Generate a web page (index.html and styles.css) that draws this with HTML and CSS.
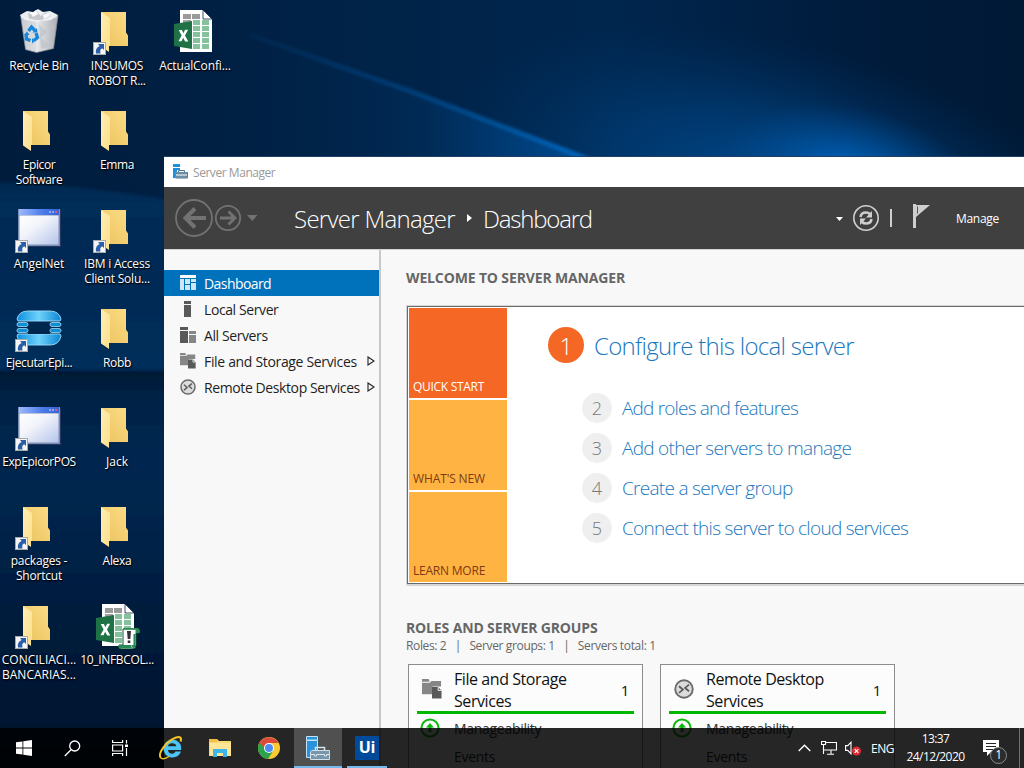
FILE: index.html
```
<!DOCTYPE html>
<html lang="en">
<head>
<meta charset="utf-8">
<title>Server Manager</title>
<link rel="stylesheet" href="styles.css">
</head>
<body>
<svg width="0" height="0" class="defs">
  <defs>
    <linearGradient id="fb" x1="0" y1="1" x2="1" y2="0"><stop offset="0" stop-color="#ecc35e"/><stop offset="1" stop-color="#fbdc86"/></linearGradient>
    <linearGradient id="ff" x1="0" y1="0" x2="1" y2="1"><stop offset="0" stop-color="#ffeeb4"/><stop offset="1" stop-color="#fddf8c"/></linearGradient>
    <linearGradient id="wt" x1="0" y1="0" x2="1" y2="0"><stop offset="0" stop-color="#9db9ff"/><stop offset=".6" stop-color="#4a7ae8"/><stop offset="1" stop-color="#3563d4"/></linearGradient>
    <linearGradient id="wb" x1="0" y1="0" x2="1" y2="1"><stop offset="0" stop-color="#fff"/><stop offset=".4" stop-color="#f2f4fb"/><stop offset="1" stop-color="#b4c4ea"/></linearGradient>
    <linearGradient id="ep" x1="0" y1="0" x2="1" y2="0"><stop offset="0" stop-color="#0a8fdc"/><stop offset=".5" stop-color="#6fd2fb"/><stop offset="1" stop-color="#0a86d2"/></linearGradient>
    <linearGradient id="bin" x1="0" y1="0" x2="1" y2="0"><stop offset="0" stop-color="#c9ccd0"/><stop offset=".5" stop-color="#dfe1e4"/><stop offset="1" stop-color="#a9adb3"/></linearGradient>
    <symbol id="folder" viewBox="0 0 48 48">
      <path d="M8 5h25v20.500l2 3V39H16z" fill="url(#fb)"/>
      <path d="M8 5l9 6v28h-1v6L8 39.500z" fill="url(#ff)"/>
    </symbol>
    <symbol id="link" viewBox="0 0 13 13">
      <path d="M0 0h13v13H0z" fill="#a9a9a9"/><path d="M1 1h11v11H1z" fill="#f5f5f5"/>
      <path d="M5 2h6v6L9.200 6.300C7 7.500 7 9 7.500 11.500H3C2.200 8 3.500 5.500 6.600 3.900z" fill="#2b5ea8"/>
    </symbol>
    <symbol id="appwin" viewBox="0 0 48 48">
      <path d="M4 5h42v37H4z" fill="#26375f"/><path d="M3 4h42v37H3z" fill="#7b8fb5"/>
      <path d="M4 4h40v6H4z" fill="url(#wt)"/><path d="M4.500 10.500h39v29h-39z" fill="url(#wb)"/>
      <path d="M34 6h2v2h-2zM37 6h2v2h-2z" fill="#8fa9ee"/><path d="M40 6h2.500v2H40z" fill="#d8567a"/>
    </symbol>
    <symbol id="sheet" viewBox="0 0 48 48">
      <path d="M9 3h23l9 9v33H9z" fill="#fff"/><path d="M32 3l9 9h-9z" fill="#fff" stroke="#0a2140" stroke-width=".8"/>
      <path d="M12 7h8v5h-8zM21 7h8v5h-8z" fill="#9a9a9a"/><path d="M12 13h8v5h-8z" fill="#a2a2a2"/>
      <path d="M22 13h7v5h-7zM31 13h7v5h-7zM22 19h7v5h-7zM31 19h7v5h-7zM22 25h7v5h-7zM31 25h7v5h-7zM22 31h7v5h-7zM31 31h7v5h-7zM22 37h7v5h-7zM31 37h7v5h-7z" fill="#85c19d"/>
      <path d="M3 17l18-3v28L3 39z" fill="#1e7245"/>
      <path d="M7.700 23h3.200l1.500 3.200 1.700-3.500h3L14 28.500l3.300 6h-3.200l-1.900-3.700-1.700 3.500H7.400l3.200-5.800z" fill="#fff"/>
    </symbol>
    <symbol id="toolbox" viewBox="0 0 24 24">
      <path d="M.5.500h11v3.500H.5zM.5 4.500h11v17H.5z" fill="#2a92da" stroke="#bfe2f7"/>
      <path d="M9.500 15v-3.500h9V15" fill="none" stroke="#d7e3ea" stroke-width="1.500"/>
      <path d="M5.500 14.500h18v9h-19v-8z" fill="#7796ab" stroke="#d0dde5"/><path d="M5 18.500h3.500v1.500h2v-1.500h8v1.500h2v-1.500H23" stroke="#dbe6ec" fill="none"/>
    </symbol>
    <symbol id="storage" viewBox="0 0 21 21">
      <path d="M0 0h7l1 3H0zM0 4h8l2-2h10v6h-9v8H0z" fill="#868686"/><path d="M10.500 8.500h6.500l3.500 3.500v8.500h-10z" fill="#595959"/><path d="M17 8.500v3.500h3.500" fill="none" stroke="#fafafa"/>
    </symbol>
    <symbol id="remote" viewBox="0 0 18 18">
      <circle cx="9" cy="9" r="7.900" fill="#dcdcdc" stroke="#6b6b6b" stroke-width="1.700"/>
      <path d="M4.500 6.500L8 9.500l-3.500 3M13.500 5L10 8l3.500 3" fill="none" stroke="#5a5a5a" stroke-width="1.600"/>
    </symbol>
    <symbol id="up" viewBox="0 0 20 20">
      <circle cx="10" cy="10" r="8.600" fill="none" stroke="#0cb80c" stroke-width="2"/><path d="M10 5l4 4.500h-2.500V14h-3V9.500H6z" fill="#0cb80c"/>
    </symbol>
  </defs>
</svg>

<main class="desktop">
  <svg class="wallpaper" viewBox="0 0 1024 768" preserveAspectRatio="none">
    <defs>
      <linearGradient id="sky" x1="0" y1="0" x2="1" y2="0"><stop offset="0" stop-color="#001c3d"/><stop offset=".3" stop-color="#002246"/><stop offset=".6" stop-color="#00264e"/><stop offset=".85" stop-color="#001b3b"/><stop offset="1" stop-color="#001935"/></linearGradient>
      <radialGradient id="haze" gradientUnits="userSpaceOnUse" cx="0" cy="0" r="1" gradientTransform="translate(780 190) rotate(14) scale(340 150)"><stop offset="0" stop-color="#004c92"/><stop offset=".5" stop-color="#003f7a" stop-opacity=".65"/><stop offset="1" stop-color="#003060" stop-opacity="0"/></radialGradient>
      <radialGradient id="glow" gradientUnits="userSpaceOnUse" cx="0" cy="0" r="1" gradientTransform="translate(850 172) rotate(12) scale(130 66)"><stop offset="0" stop-color="#006ac8"/><stop offset=".4" stop-color="#005cb0" stop-opacity=".6"/><stop offset="1" stop-color="#004c94" stop-opacity="0"/></radialGradient>
      <linearGradient id="under" gradientUnits="userSpaceOnUse" x1="250" y1="0" x2="740" y2="0"><stop offset="0" stop-color="#00234a" stop-opacity="0"/><stop offset=".35" stop-color="#002c58"/><stop offset=".68" stop-color="#0054a2"/><stop offset="1" stop-color="#0060b4"/></linearGradient>
      <linearGradient id="beam" gradientUnits="userSpaceOnUse" x1="250" y1="0" x2="580" y2="0"><stop offset="0" stop-color="#0a4282" stop-opacity=".15"/><stop offset=".5" stop-color="#084a8c" stop-opacity=".7"/><stop offset="1" stop-color="#0564ba"/></linearGradient>
      <linearGradient id="left" x1="0" y1="0" x2="0" y2="1"><stop offset="0" stop-color="#00305e" stop-opacity=".5"/><stop offset=".1" stop-color="#002d58"/><stop offset=".35" stop-color="#002a54"/><stop offset="1" stop-color="#002f5c"/></linearGradient>
      <linearGradient id="low" x1="0" y1="0" x2="0" y2="1"><stop offset="0" stop-color="#001832"/><stop offset=".05" stop-color="#002043"/><stop offset=".2" stop-color="#002850"/><stop offset=".4" stop-color="#00234a"/><stop offset=".55" stop-color="#001d3f"/><stop offset="1" stop-color="#001128"/></linearGradient>
      <filter id="soft" x="-10%" y="-50%" width="120%" height="200%"><feGaussianBlur stdDeviation="1.800"/></filter>
    </defs>
    <path d="M0 0h1024v768H0z" fill="url(#sky)"/>
    <path d="M400 0h624v160H400z" fill="url(#haze)"/>
    <path d="M240 32L410 92 590 160H240z" fill="url(#under)" opacity=".75"/>
    <path d="M600 60h424v100H600z" fill="url(#glow)"/>
    <path d="M250 35L410 91 590 160" fill="none" stroke="url(#beam)" stroke-width="5" filter="url(#soft)"/>
    <path d="M-10 182Q80 184 180 202V400H-10z" fill="url(#left)" filter="url(#soft)"/>
    <path d="M-10 371h190v410H-10z" fill="url(#low)" filter="url(#soft)"/>
  </svg>

  <section class="icons">
    <div class="icon"><div class="pic"><svg viewBox="0 0 48 48">
      <path d="M5.500 8l5 34.500 11 3 17-4 4.500-33z" fill="url(#bin)" stroke="#8c9299" stroke-width=".7"/>
      <path d="M5 8l7-4 6 1 5-3 5 3 7-1 8 4-7 5-14 2-12-2z" fill="#eceef0"/><path d="M13 6l5 2 3-4 5 5 5-4 5 4-9 5-13-2z" fill="#c5c9cd"/><path d="M15 5l3 1 3-3 2 4-5 3zM28 8l5-2 2 3-6 3z" fill="#fafafa"/>
      <path d="M6 10l16 4 20-4M22 14v31" fill="none" stroke="#f5f6f7" stroke-width=".8"/><path d="M24 18l8 7-6 6 9 8-9 3zM34 14l6 4-4 8z" fill="#bfc3c8" opacity=".7"/>
      <g fill="none" stroke="#1787dc" stroke-width="3.400"><path d="M13.500 24l3-4 3.500 3.500M21 26l1.500 4.500-3.500 3M15.500 33.500l-4-1.500-.5-5"/></g>
      <path d="M17.500 25.500l5 0-.5-4.500zM17 31l0 5.500 3-2.500zM9 28l3-3.500 2.500 3.500z" fill="#1787dc"/>
    </svg></div><p>Recycle Bin</p></div>
    <div class="icon"><div class="pic"><svg viewBox="0 0 48 48"><use href="#folder"/></svg></div><p class="t4">Epicor<br>Software</p></div>
    <div class="icon"><div class="pic"><svg viewBox="0 0 48 48"><use href="#appwin"/></svg><svg class="arrow"><use href="#link"/></svg></div><p class="t1">AngelNet</p></div>
    <div class="icon"><div class="pic"><svg viewBox="0 0 48 48">
      <g stroke="#9cdcff" stroke-width=".9"><path d="M2 15Q4 7 13 7h22q9 0 11 8l-1 2H3z" fill="url(#ep)"/><path d="M3 30h42l1 2q-2 9-11 9H13Q4 41 2 32z" fill="url(#ep)"/></g>
      <path d="M13 18h22v12H13z" fill="#00284f"/>
      <g fill="#0d8fd8" stroke="#a9d9f3" stroke-width=".8"><rect x="2" y="18.500" width="11" height="4" rx="1.900"/><rect x="2" y="24.500" width="11" height="4" rx="1.900"/><rect x="35" y="18.500" width="11" height="4" rx="1.900"/><rect x="35" y="24.500" width="11" height="4" rx="1.900"/></g>
    </svg><svg class="arrow"><use href="#link"/></svg></div><p class="t4">EjecutarEpi...</p></div>
    <div class="icon"><div class="pic"><svg viewBox="0 0 48 48"><use href="#appwin"/></svg><svg class="arrow"><use href="#link"/></svg></div><p class="t4">ExpEpicorPOS</p></div>
    <div class="icon"><div class="pic"><svg viewBox="0 0 48 48"><use href="#folder"/></svg><svg class="arrow"><use href="#link"/></svg></div><p class="t2">packages -<br>Shortcut</p></div>
    <div class="icon"><div class="pic"><svg viewBox="0 0 48 48"><use href="#folder"/></svg><svg class="arrow"><use href="#link"/></svg></div><p class="t0">CONCILIACI...<br>BANCARIAS...</p></div>

    <div class="icon"><div class="pic"><svg viewBox="0 0 48 48"><use href="#folder"/></svg><svg class="arrow"><use href="#link"/></svg></div><p>INSUMOS<br>ROBOT R...</p></div>
    <div class="icon"><div class="pic"><svg viewBox="0 0 48 48"><use href="#folder"/></svg></div><p class="t4">Emma</p></div>
    <div class="icon"><div class="pic"><svg viewBox="0 0 48 48"><use href="#folder"/></svg><svg class="arrow"><use href="#link"/></svg></div><p class="t2">IBM i Access<br>Client Solu...</p></div>
    <div class="icon"><div class="pic"><svg viewBox="0 0 48 48"><use href="#folder"/></svg></div><p>Robb</p></div>
    <div class="icon"><div class="pic"><svg viewBox="0 0 48 48"><use href="#folder"/></svg></div><p class="t0">Jack</p></div>
    <div class="icon"><div class="pic"><svg viewBox="0 0 48 48"><use href="#folder"/></svg></div><p>Alexa</p></div>
    <div class="icon"><div class="pic"><svg viewBox="0 0 48 48"><use href="#sheet"/>
      <path d="M30 28h15q2 1 1 4h-3v12q0 4-4 4H28q-3-1-2-4h4z" fill="#fff" stroke="#0f5a34" stroke-width="1"/><path d="M30 27h15q2.500 1.500 1.500 5h-4v-3.500H31zM26 44h12q0 3 3 3.500H27.500Q25 47 26 44zM42.500 33v11q-.5 3-2 3.500-2-1-2-3.500h2V33z" fill="#2a8a57"/>
      <path d="M34 30h4l-.7 8h-2.600zM34.700 39.500h2.600V42h-2.600z" fill="#333"/></svg></div><p class="t3">10_INFBCOL...</p></div>

    <div class="icon"><div class="pic"><svg viewBox="0 0 48 48"><use href="#sheet"/></svg></div><p class="t1">ActualConfi...</p></div>
  </section>

  <section class="window">
    <header class="titlebar">
      <svg width="15" height="15" viewBox="0 0 15 15"><path d="M0 0h7v3H0zM0 4h7v2H4v3H2v5H0z" fill="#1e8fe0"/><path d="M5.500 8V6.500h6V8M2.500 8.500h12V14h-12z" fill="none" stroke="#54778e"/><path d="M2 8h12.500v2.500H2zM2 11.500h12.500V14H2z" fill="#6b8da5"/></svg>
      <span>Server Manager</span>
    </header>
    <nav class="banner">
      <svg class="navbtns" width="84" height="40" viewBox="0 0 84 40" fill="none" stroke="#727272">
        <circle cx="19" cy="20" r="18" stroke-width="1.800"/><path d="M31 20H10M20 10.500L10.500 20 20 29.500" stroke-width="4"/>
        <circle cx="53" cy="20" r="12.200" stroke-width="1.800"/><path d="M45 20h14M53.500 13.500L60 20l-6.500 6.500" stroke-width="2.800"/>
        <path d="M72 17h10.500l-5.200 6z" fill="#727272" stroke="none"/>
      </svg>
      <h1 class="crumb"><span class="c1">Server Manager</span><svg width="5" height="8" viewBox="0 0 5 8"><path d="M0 0l5 4-5 4z" fill="#fff"/></svg><span class="c2">Dashboard</span></h1>
      <div class="tools">
        <svg width="96" height="36" viewBox="0 0 96 36">
          <path d="M0 17h7l-3.500 4z" fill="#fff"/>
          <circle cx="30" cy="18" r="12.200" fill="none" stroke="#cfcfcf" stroke-width="1.600"/>
          <path d="M24.500 17q.5-4.500 5.500-4.500 2.500 0 4 1.500M35.500 19q-.5 4.500-5.500 4.500-2.500 0-4-1.500" fill="none" stroke="#cfcfcf" stroke-width="2.500"/><path d="M36 11v6.500h-6zM24 25v-6.500h6z" fill="#cfcfcf"/>
          <path d="M54 9h2v18h-2z" fill="#cfcfcf"/>
          <path d="M77 4h3v24h-3zM80 5h14L80 17z" fill="#cfcfcf"/><path d="M81.500 6.500v7" stroke="#555"/>
        </svg>
        <span class="manage">Manage</span>
      </div>
    </nav>
    <div class="body">
      <aside class="sidebar">
        <div class="item active"><svg viewBox="0 0 16 16"><path d="M0 0h16v3H0z" fill="#fff"/><path d="M0 4h4v11H0zM5 4h5v5H5zM11 4h5v3h-5zM5 10h5v5H5zM11 8h5v7h-5z" fill="#cfe6f6"/></svg><span class="t6">Dashboard</span></div>
        <div class="item"><svg viewBox="0 0 16 16"><path d="M4 0h7v3H4zM4 4h7v12H4z" fill="#595959"/></svg><span class="t4">Local Server</span></div>
        <div class="item"><svg viewBox="0 0 16 16"><path d="M0 0h8v3H0zM0 4h8v12H0z" fill="#595959"/><path d="M9 4h7v3H9zM9 8h7v8H9z" fill="#868686"/></svg><span class="t4">All Servers</span></div>
        <div class="item"><svg viewBox="0 0 21 21"><use href="#storage"/></svg><span>File and Storage Services</span><svg class="exp" viewBox="0 0 8 10"><path d="M1 1l6 4-6 4z" fill="none" stroke="#222" stroke-width="1.100"/></svg></div>
        <div class="item"><svg viewBox="0 0 18 18"><use href="#remote"/></svg><span class="t4">Remote Desktop Services</span><svg class="exp" viewBox="0 0 8 10"><path d="M1 1l6 4-6 4z" fill="none" stroke="#222" stroke-width="1.100"/></svg></div>
      </aside>
      <div class="content">
        <h2>WELCOME TO SERVER MANAGER</h2>
        <div class="welcome">
          <div class="tiles"><div class="tile hot">QUICK START</div><div class="tile t1">WHAT'S NEW</div><div class="tile t2">LEARN MORE</div></div>
          <div class="steps">
            <div class="first"><b>1</b><span>Configure this local server</span></div>
            <div class="step"><b>2</b><span class="s8">Add roles and features</span></div>
            <div class="step"><b>3</b><span>Add other servers to manage</span></div>
            <div class="step"><b>4</b><span>Create a server group</span></div>
            <div class="step"><b>5</b><span>Connect this server to cloud services</span></div>
          </div>
        </div>
        <h2 class="roles">ROLES AND SERVER GROUPS</h2>
        <div class="counts"><span>Roles: 2</span><i>|</i><span>Server groups: 1</span><i>|</i><span class="t3">Servers total: 1</span></div>
        <div class="cards">
          <article class="card"><div class="head"><svg viewBox="0 0 21 21"><use href="#storage"/></svg><h3>File and Storage<br>Services</h3><em>1</em></div>
            <div class="row"><svg viewBox="0 0 20 20"><use href="#up"/></svg><span>Manageability</span></div><div class="row"><span class="solo">Events</span></div></article>
          <article class="card"><div class="head"><svg viewBox="0 0 18 18"><use href="#remote"/></svg><h3>Remote Desktop<br>Services</h3><em>1</em></div>
            <div class="row"><svg viewBox="0 0 20 20"><use href="#up"/></svg><span>Manageability</span></div><div class="row"><span class="solo">Events</span></div></article>
        </div>
      </div>
    </div>
  </section>

  <footer class="taskbar">
    <div class="btn"><svg width="16" height="16" viewBox="0 0 16 16"><path d="M0 2.300L6.500 1.400v6.100H0zM7.300 1.300L16 0v7.500H7.300zM0 8.400h6.500v6.200L0 13.700zM7.300 8.400H16V16l-8.700-1.300z" fill="#fff"/></svg></div>
    <div class="btn"><svg width="17" height="17" viewBox="0 0 17 17" fill="none" stroke="#fff" stroke-width="1.300"><circle cx="10.700" cy="6" r="5"/><path d="M7 9.700L.8 16"/></svg></div>
    <div class="btn"><svg width="16" height="16" viewBox="0 0 16 16" fill="none" stroke="#fff" stroke-width="1.200"><path d="M.6 0v2.500h10V0M.6 16v-2.500h10V16M.6 5h10v6H.6zM14.500 0v3.500M14.500 8v8"/><path d="M13 4.500h3v2.500h-3z" fill="#fff" stroke="none"/></svg></div>
    <div class="btn ie"><svg width="24" height="24" viewBox="0 0 24 24"><path d="M22 15.500A9 9 0 1 1 21.500 8.500q.9 2.200.7 5.500H9q.4 3.800 4.200 3.800 2.300 0 3.300-2.300zM9 10.300h8.300q-.4-3-4.100-3-3.700 0-4.200 3z" fill="#4cc4f6" fill-rule="evenodd"/><path d="M2 22C-2 18 7 5 17 1.500c4-1.300 6 .3 4.500 4" fill="none" stroke="#f4c320" stroke-width="2"/><path d="M2 22c2 1.500 5 .5 8-1.500" fill="none" stroke="#f4c320" stroke-width="1.500"/></svg></div>
    <div class="btn"><svg width="22" height="19" viewBox="0 0 22 19"><path d="M0 0h8l2 2h12v15H0z" fill="#f8d775"/><path d="M1 4h21v13H1z" fill="#ffe697"/><path d="M0 0h8v3H0z" fill="#f1bd43"/><path d="M4 18v-8h14v8h-4v-4H8v4z" fill="#3db5e8"/></svg></div>
    <div class="btn"><svg width="22" height="22" viewBox="0 0 22 22"><circle cx="11" cy="11" r="11" fill="#f8cb35"/><path d="M1.500 5.500A11 11 0 0 0 10 22l5.300-8.500L11 11z" fill="#2ba24c"/><path d="M1.500 5.500A11 11 0 0 1 20.500 6H11q-4.300.3-5 5z" fill="#dc4a3d"/><circle cx="11" cy="11" r="5" fill="#fff"/><circle cx="11" cy="11" r="4" fill="#4c8bf5"/></svg></div>
    <div class="btn on"><svg width="24" height="24"><use href="#toolbox"/></svg></div>
    <div class="btn run"><div class="ui">Ui</div></div>
    <div class="tray">
      <svg class="chev" width="13" height="8" viewBox="0 0 13 8"><path d="M.7 7L6.500 1.200 12.300 7" fill="none" stroke="#fff" stroke-width="1.400"/></svg>
      <svg class="net" width="16" height="14" viewBox="0 0 16 14" fill="none" stroke="#fff" stroke-width="1.100"><path d="M4.500 1.500h11v7.500h-11M.5.500h4v3h-4zM2.500 3.500V13M2 9h2.500M10 9v4M6 13.300h7"/></svg>
      <svg class="vol" width="16" height="15" viewBox="0 0 16 15"><path d="M.6 4.600h2.200L6 1.200v11.600L2.800 9.400H.6z" fill="none" stroke="#fff" stroke-width="1.100"/><circle cx="11.500" cy="10" r="4.500" fill="#dc2b32"/><path d="M9.700 8.200l3.600 3.600M13.300 8.200l-3.600 3.600" stroke="#fff" stroke-width="1.200"/></svg>
      <span class="lang">ENG</span>
      <div class="clock"><span class="time">13:37</span><span>24/12/2020</span></div>
      <div class="note"><svg width="16" height="16" viewBox="0 0 16 16"><path d="M0 0h16v12H8l-4 4v-4H0z" fill="#fff"/><path d="M3 3.500h10M3 6.500h10M3 9.500h7" stroke="#252525"/></svg><span class="badge">1</span></div>
      <div class="peek"></div>
    </div>
  </footer>
</main>
</body>
</html>
```
FILE: styles.css
```
* { box-sizing: border-box; margin: 0; padding: 0; }
body { font-family: "Open Sans", "Noto Sans", sans-serif; font-size: 12px; letter-spacing: -0.3px; overflow: hidden; }
svg { display: block; flex: none; }
.defs { position: absolute; }
.t0 { letter-spacing: 0 !important; }
.t1 { letter-spacing: -0.12px !important; }
.t2 { letter-spacing: -0.22px !important; }
.t3 { letter-spacing: -0.33px !important; }
.t4 { letter-spacing: -0.4px !important; }
.t6 { letter-spacing: -0.57px !important; }

.desktop { position: relative; width: 1024px; height: 768px; overflow: hidden; background: #001c3d; }
.wallpaper { position: absolute; inset: 0; width: 100%; height: 100%; }

.icons { position: relative; display: grid; grid-auto-flow: column; grid-template-rows: repeat(7, 99px); grid-auto-columns: 78px; width: max-content; }
.icon { padding-top: 7px; display: flex; flex-direction: column; align-items: center; }
.pic { position: relative; width: 48px; height: 48px; }
.pic svg { width: 48px; height: 48px; }
.pic .arrow { position: absolute; left: 0; top: 35px; width: 13px; height: 13px; }
.icon p { margin-top: 3px; line-height: 15px; color: #fff; text-align: center; white-space: nowrap; text-shadow: 0 1px 2px #000, 1px 1px 1px rgba(0,0,0,.7); }

.window { position: absolute; left: 164px; top: 157px; width: 862px; height: 620px; background: #f8f8f8; box-shadow: 0 -1px 0 #1d4064; }
.titlebar { height: 30px; background: #fff; display: flex; align-items: center; gap: 5px; padding-left: 9px; color: #999; letter-spacing: -0.45px; }
.titlebar svg { margin-bottom: 2px; }
.banner { height: 62px; background: #404040; display: flex; align-items: center; padding-left: 11px; color: #fff; }
.crumb { display: flex; align-items: center; font-size: 24px; font-weight: 300; line-height: 32px; margin-left: 35px; padding-top: 2px; }
.crumb svg { margin: 0 11px 3px 12px; }
.c1 { width: 161px; letter-spacing: -0.7px; white-space: nowrap; }
.c2 { width: 110px; letter-spacing: -1.2px; }
.tools { display: flex; align-items: center; margin-left: 243px; }
.manage { margin-left: 24px; }

.body { display: flex; height: 528px; border-top: 1px solid #d4d4d4; }
.sidebar { flex: none; width: 217px; border-right: 2px solid #c9c9c9; padding-top: 20px; font-size: 14px; letter-spacing: -0.33px; color: #1e1e1e; }
.item { height: 26px; display: flex; align-items: center; padding-left: 16px; padding-right: 4px; white-space: nowrap; }
.item svg { width: 16px; height: 16px; margin-right: 8px; }
.item span { padding-top: 1px; }
.item .exp { width: 8px; height: 10px; margin: 0 0 0 auto; }
.active { background: #0072bc; color: #fff; }

.content { padding: 18px 0 0 25px; flex: 1; min-width: 0; }
h2 { font-size: 14px; line-height: 20px; font-weight: 700; letter-spacing: -0.14px; color: #666; }
.welcome { margin-top: 18px; width: 700px; height: 278px; border: 1px solid #6a6a6a; background: #fff; box-shadow: 0 0 0 1px #d6d6d6, 0 2px 0 #d6d6d6; display: flex; padding: 1px; margin-left: 1px; }
.tiles { display: flex; flex-direction: column; gap: 2px; width: 98px; }
.tile { height: 90px; background: #ffb343; color: #7d3b12; display: flex; align-items: flex-end; padding: 0 0 3px 4px; line-height: 16px; }
.hot { background: #f46725; color: #fff; }
.steps { padding: 19px 0 0 41px; }
.steps b { font-weight: 300; border-radius: 50%; display: flex; align-items: center; justify-content: center; letter-spacing: 0; }
.steps span { color: #1a78be; white-space: nowrap; }
.first { display: flex; align-items: center; height: 36px; font-size: 24px; margin-bottom: 30px; font-weight: 300; letter-spacing: -0.7px; }
.first b { width: 36px; height: 36px; background: #f46725; color: #fff; margin-right: 10px; }
.first span { padding-top: 1px; }
.step { display: flex; align-items: center; height: 30px; margin: 0 0 10px 34px; font-size: 19px; font-weight: 300; letter-spacing: -0.71px; }
.step b { width: 30px; height: 30px; background: #efefef; color: #777; margin-right: 10px; font-size: 18px; }
.s8 { letter-spacing: -0.82px; }
.roles { margin-top: 34px; }
.counts { display: flex; color: #666; line-height: 16px; letter-spacing: -0.36px; }
.counts i { font-style: normal; width: 23px; text-align: center; }
.cards { display: flex; gap: 17px; padding: 10px 0 0 2px; }
.card { flex: none; width: 235px; height: 140px; border: 1px solid #8c8c8c; background: #fcfcfc; padding: 0 8px; color: #111; }
.head { height: 49px; border-bottom: 3px solid #00b800; display: flex; align-items: center; padding-left: 5px; }
.head svg { width: 20px; height: 20px; margin-right: 12px; margin-top: 1px; }
.head h3 { font-size: 16px; font-weight: 400; line-height: 22px; letter-spacing: -0.43px; padding-top: 4px; flex: 1; }
.head em { font-style: normal; font-size: 15px; margin-right: 5px; padding-top: 3px; }
.row { height: 28px; display: flex; align-items: center; padding: 1px 0 0 3px; font-size: 14px; color: #333; }
.row svg { width: 20px; height: 20px; margin: 0 14px 1px 0; }
.row .solo { margin-left: 34px; }

.taskbar { position: absolute; left: 0; right: 0; bottom: 0; height: 40px; background: rgba(0, 0, 0, .85); display: flex; color: #fff; }
.btn { width: 48px; margin-right: 1px; height: 40px; display: flex; align-items: center; justify-content: center; }
.btn:nth-child(-n+2) { margin-right: 0; }
.ie { margin-left: 2px; }
.on { background: rgba(255, 255, 255, .2); border-bottom: 2px solid #76b9ed; padding-top: 2px; }
.run { border-bottom: 2px solid #76b9ed; width: 40px; margin-left: 4px; padding-top: 2px; }
.ui { width: 24px; height: 24px; background: #004a9c; font-weight: 700; font-size: 16px; line-height: 23px; text-align: center; }
.tray { margin-left: auto; display: flex; align-items: center; height: 40px; }
.chev { margin-right: 10px; }
.net { margin-right: 8px; }
.vol { margin-right: 10px; }
.lang { width: 25px; letter-spacing: -0.5px; }
.clock { width: 79px; display: flex; flex-direction: column; align-items: center; line-height: 18px; letter-spacing: -0.57px; }
.note { position: relative; width: 44px; padding-left: 8px; }
.badge { position: absolute; left: 15px; top: 7px; width: 17px; height: 17px; border-radius: 50%; border: 1.5px solid #8c8c8c; background: #2c2c2c; font-size: 12px; line-height: 14px; text-align: center; }
.peek { width: 5px; height: 40px; border-left: 1px solid #707070; }
```
